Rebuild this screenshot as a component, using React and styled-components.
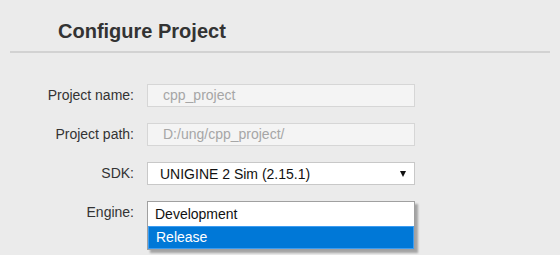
import React from "react";
import styled, { createGlobalStyle } from "styled-components";

const GlobalStyle = createGlobalStyle`
    html, body {
        margin: 0;
        padding: 0;
        background-color: #ebebeb;
    }
    body {
        font-family: "Liberation Sans", Arial, sans-serif;
        color: #333333;
    }
`;

const Page = styled.div`
    width: 560px;
    height: 255px;
    overflow: hidden;
    background-color: #ebebeb;
`;

const Header = styled.div`
    margin: 0 10px;
    padding: 19px 0 0 48px;
    height: 32px;
    border-bottom: 2px solid #d2d2d2;
`;

const Title = styled.h1`
    margin: 0;
    font-size: 20px;
    line-height: 24px;
    font-weight: bold;
    color: #333333;
`;

const Form = styled.div`
    padding-top: 31px;
    display: grid;
    grid-template-columns: 134px 268px;
    grid-auto-rows: 23px;
    column-gap: 13px;
    row-gap: 16px;
    align-items: center;
`;

const Label = styled.label`
    justify-self: end;
    font-size: 14px;
    line-height: 23px;
    color: #333333;
`;

const Field = styled.div`
    position: relative;
    height: 23px;
`;

const TextBox = styled.div`
    box-sizing: border-box;
    height: 23px;
    padding-left: 15px;
    font-size: 14px;
    line-height: 21px;
    color: #a6a6a6;
    background-color: #f4f4f4;
    border: 1px solid #d6d6d6;
`;

const Select = styled.div`
    box-sizing: border-box;
    height: 23px;
    padding: 0 8px 0 12px;
    display: flex;
    align-items: center;
    justify-content: space-between;
    font-size: 14px;
    color: #111111;
    background-color: #ffffff;
    border: 1px solid #c8c8c8;
`;

const Arrow = styled.span`
    width: 0;
    height: 0;
    border-left: 3.5px solid transparent;
    border-right: 3.5px solid transparent;
    border-top: 6px solid #111111;
`;

const Popup = styled.ul`
    position: absolute;
    top: 0;
    left: 0;
    width: 268px;
    box-sizing: border-box;
    margin: 0;
    padding: 0;
    list-style: none;
    background-color: #ffffff;
    border: 1px solid #a0a0a0;
    box-shadow: 3px 3px 2px rgba(0, 0, 0, 0.3);
`;

const Option = styled.li`
    box-sizing: border-box;
    height: ${props => (props.selected ? "23px" : "24px")};
    padding-left: 7px;
    font-size: 14px;
    line-height: ${props => (props.selected ? "21px" : "24px")};
    color: ${props => (props.selected ? "#ffffff" : "#111111")};
    background-color: ${props => (props.selected ? "#0078d7" : "#ffffff")};
    border: ${props => (props.selected ? "1px solid #3d9cf0" : "none")};
`;

const App = () => (
    <Page>
        <GlobalStyle />
        <Header>
            <Title>{`Configure Project`}</Title>
        </Header>

        <Form>
            <Label>{`Project name:`}</Label>
            <TextBox>{`cpp_project`}</TextBox>

            <Label>{`Project path:`}</Label>
            <TextBox>{`D:/ung/cpp_project/`}</TextBox>

            <Label>{`SDK:`}</Label>
            <Select>
                <span>{`UNIGINE 2 Sim (2.15.1)`}</span>
                <Arrow />
            </Select>

            <Label>{`Engine:`}</Label>
            <Field>
                <Popup>
                    <Option>{`Development`}</Option>
                    <Option selected>{`Release`}</Option>
                </Popup>
            </Field>
        </Form>
    </Page>
);

export default App;
